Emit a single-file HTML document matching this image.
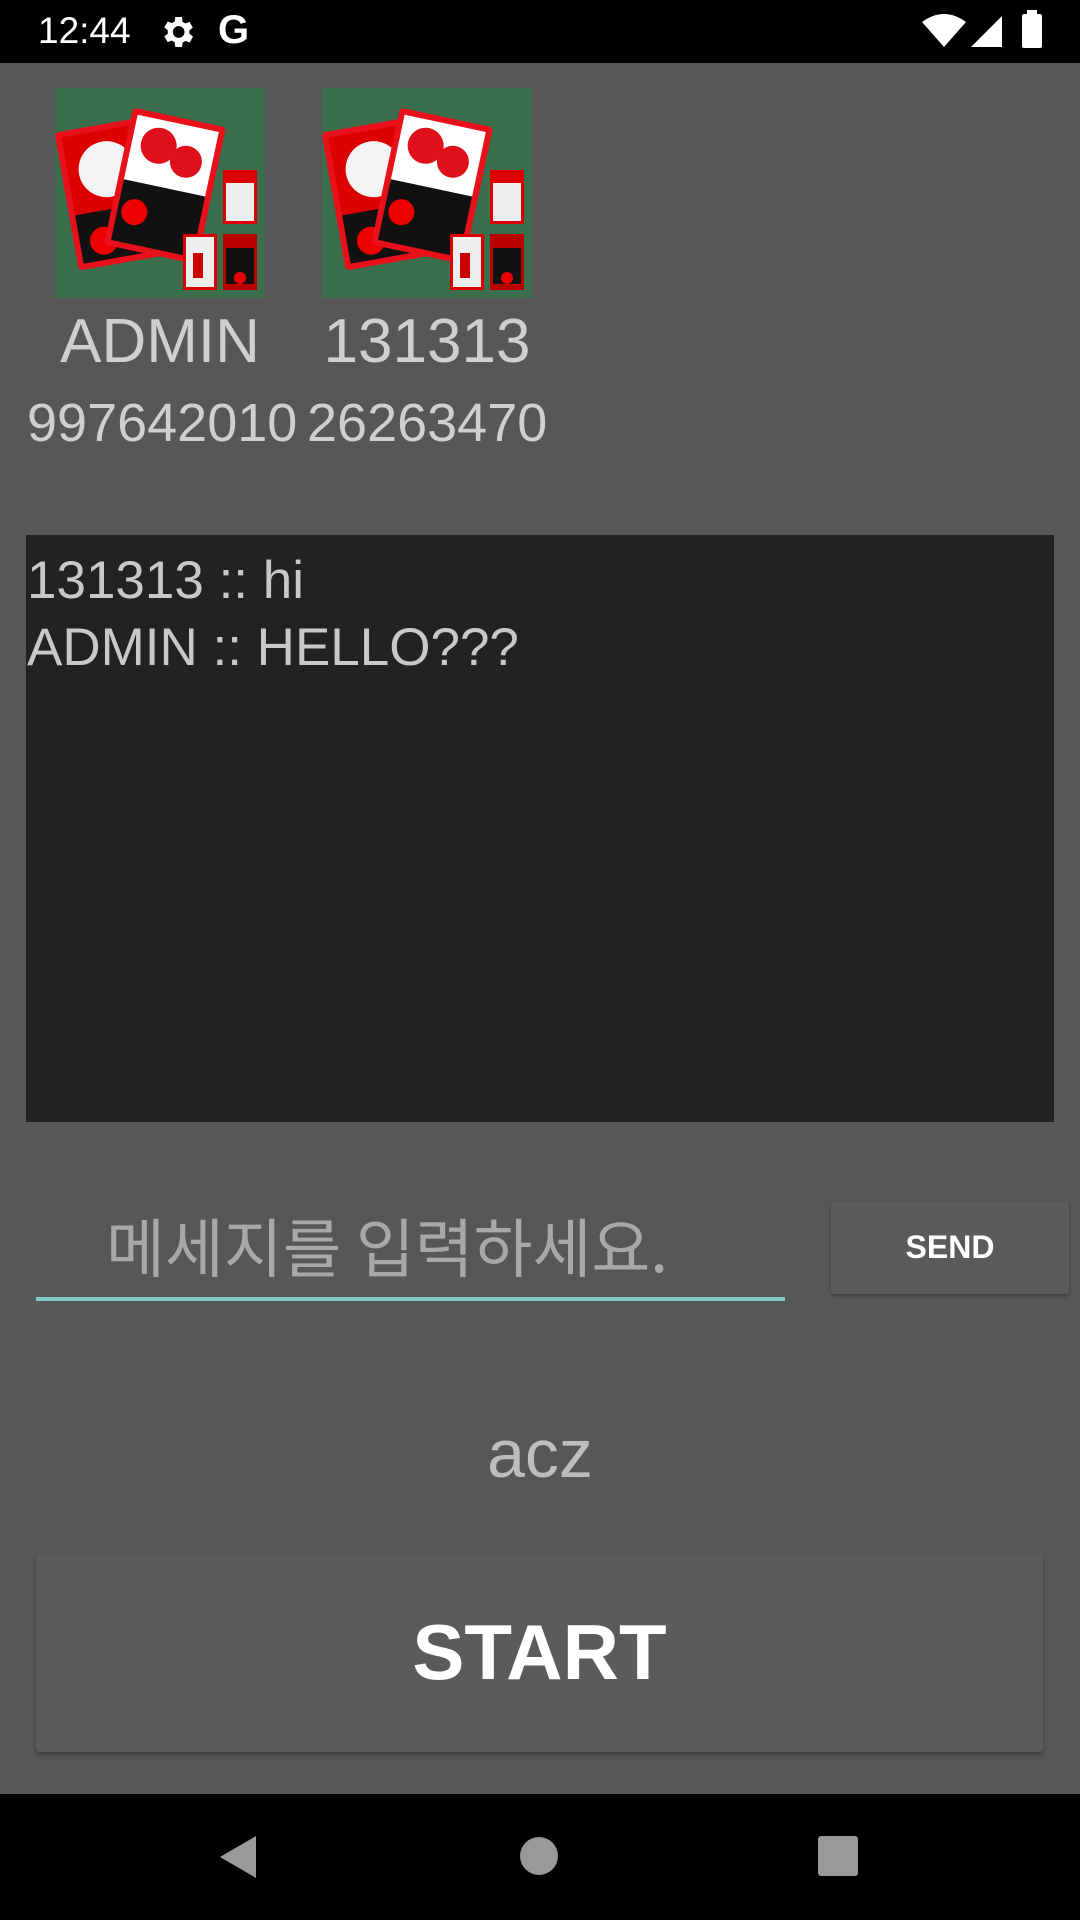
<!DOCTYPE html>
<html><head><meta charset="utf-8"><style>
*{margin:0;padding:0;box-sizing:border-box}
body{width:1080px;height:1920px;background:#575757;position:relative;overflow:hidden;font-family:"Liberation Sans","Noto Sans CJK KR",sans-serif}
.abs{position:absolute}
.status{left:0;top:0;width:1080px;height:63px;background:#000}
.nav{left:0;top:1794px;width:1080px;height:126px;background:#000}
.av{width:210px;height:210px;background:#3b6e4d;overflow:hidden}
.name{font-size:62px;color:#cfcfcf;text-align:center;width:260px}
.score{font-size:54px;color:#cfcfcf}
.chat{left:26px;top:535px;width:1028px;height:587px;background:#222;color:#c8c8c8;font-size:53px;line-height:67px;padding:12px 0 0 1px}
</style></head><body>
<div class="abs status">
  <div class="abs" style="left:38px;top:10px;color:#fff;font-size:37px;letter-spacing:0px">12:44</div>
  <svg class="abs" style="left:157px;top:12px" width="40" height="40" viewBox="0 0 24 24"><path fill="#fff" d="M19.4 13a7.5 7.5 0 0 0 0-2l2.1-1.6-2-3.5-2.5 1a7 7 0 0 0-1.7-1L15 3h-4l-.4 2.7a7 7 0 0 0-1.7 1l-2.5-1-2 3.5L6.5 11a7.5 7.5 0 0 0 0 2l-2.1 1.6 2 3.5 2.5-1a7 7 0 0 0 1.7 1L11 21h4l.4-2.7a7 7 0 0 0 1.7-1l2.5 1 2-3.5zM13 15.5a3.5 3.5 0 1 1 0-7 3.5 3.5 0 0 1 0 7z"/></svg>
  <div class="abs" style="left:218px;top:8px;color:#fff;font-size:40px;font-weight:bold">G</div>
  <svg class="abs" style="left:922px;top:14px" width="44" height="34" viewBox="0 0 44 34"><path fill="#fff" d="M22 33L0 8Q22-8 44 8z"/></svg>
  <svg class="abs" style="left:970px;top:14px" width="34" height="34" viewBox="0 0 34 34"><path fill="#fff" d="M32 2V33H1z"/></svg>
  <div class="abs" style="left:1022px;top:14px;width:20px;height:34px;background:#fff;border-radius:2px"></div>
  <div class="abs" style="left:1027px;top:10px;width:10px;height:5px;background:#fff"></div>
</div>

<div class="abs av" style="left:55px;top:88px">
 <svg width="210" height="210" viewBox="0 0 210 210">
  <g transform="rotate(-10 60 100)"><rect x="10" y="35" width="95" height="140" rx="4" fill="#e8101a"/><rect x="16" y="41" width="83" height="128" fill="#d00"/><circle cx="55" cy="80" r="28" fill="#f4f4f4"/><rect x="16" y="120" width="83" height="49" fill="#111"/><circle cx="40" cy="150" r="14" fill="#e00"/></g>
  <g transform="rotate(12 110 100)"><rect x="62" y="28" width="95" height="140" rx="4" fill="#e8101a"/><rect x="68" y="34" width="83" height="70" fill="#fff"/><circle cx="95" cy="60" r="18" fill="#e0101a"/><circle cx="125" cy="70" r="16" fill="#e0101a"/><rect x="68" y="100" width="83" height="62" fill="#111"/><circle cx="85" cy="130" r="13" fill="#e00"/></g>
  <rect x="168" y="82" width="34" height="54" fill="#d00"/><rect x="171" y="95" width="28" height="38" fill="#eee"/>
  <rect x="128" y="146" width="34" height="56" fill="#d00"/><rect x="131" y="149" width="28" height="50" fill="#eee"/><rect x="138" y="165" width="10" height="25" fill="#c00"/>
  <rect x="168" y="146" width="34" height="56" fill="#b00"/><rect x="171" y="160" width="28" height="36" fill="#111"/><circle cx="185" cy="190" r="6" fill="#e00"/>
 </svg>
</div>
<div class="abs av" style="left:322px;top:88px">
 <svg width="210" height="210" viewBox="0 0 210 210">
  <g transform="rotate(-10 60 100)"><rect x="10" y="35" width="95" height="140" rx="4" fill="#e8101a"/><rect x="16" y="41" width="83" height="128" fill="#d00"/><circle cx="55" cy="80" r="28" fill="#f4f4f4"/><rect x="16" y="120" width="83" height="49" fill="#111"/><circle cx="40" cy="150" r="14" fill="#e00"/></g>
  <g transform="rotate(12 110 100)"><rect x="62" y="28" width="95" height="140" rx="4" fill="#e8101a"/><rect x="68" y="34" width="83" height="70" fill="#fff"/><circle cx="95" cy="60" r="18" fill="#e0101a"/><circle cx="125" cy="70" r="16" fill="#e0101a"/><rect x="68" y="100" width="83" height="62" fill="#111"/><circle cx="85" cy="130" r="13" fill="#e00"/></g>
  <rect x="168" y="82" width="34" height="54" fill="#d00"/><rect x="171" y="95" width="28" height="38" fill="#eee"/>
  <rect x="128" y="146" width="34" height="56" fill="#d00"/><rect x="131" y="149" width="28" height="50" fill="#eee"/><rect x="138" y="165" width="10" height="25" fill="#c00"/>
  <rect x="168" y="146" width="34" height="56" fill="#b00"/><rect x="171" y="160" width="28" height="36" fill="#111"/><circle cx="185" cy="190" r="6" fill="#e00"/>
 </svg>
</div>

<div class="abs name" style="left:30px;top:306px">ADMIN</div>
<div class="abs name" style="left:297px;top:306px">131313</div>
<div class="abs score" style="left:27px;top:392px">997642010</div>
<div class="abs score" style="left:307px;top:392px">26263470</div>

<div class="abs chat">131313 :: hi<br>ADMIN :: HELLO???</div>

<div class="abs" style="left:106px;top:1200px;font-family:'Noto Sans CJK KR',sans-serif;font-size:64px;color:#a8a8a8;line-height:90px">메세지를 입력하세요.</div>
<div class="abs" style="left:36px;top:1297px;width:749px;height:4px;background:#80cbc4"></div>

<div class="abs" style="left:831px;top:1201px;width:238px;height:93px;background:#5b5b5d;border-radius:3px;box-shadow:0 2px 3px rgba(0,0,0,.3);color:#fff;font-size:32px;font-weight:bold;text-align:center;line-height:93px">SEND</div>

<div class="abs" style="left:0;top:1415px;width:1080px;text-align:center;font-size:68px;color:#bdbdbd">acz</div>

<div class="abs" style="left:36px;top:1553px;width:1007px;height:199px;background:#5b5b5d;border-radius:4px;box-shadow:0 3px 4px rgba(0,0,0,.3);color:#fff;font-size:78px;font-weight:bold;text-align:center;line-height:199px">START</div>

<div class="abs nav">
  <svg class="abs" style="left:218px;top:40px" width="40" height="46" viewBox="0 0 40 46"><path fill="#999" d="M38 2V44L2 23z"/></svg>
  <div class="abs" style="left:520px;top:43px;width:38px;height:38px;border-radius:50%;background:#999"></div>
  <div class="abs" style="left:818px;top:42px;width:40px;height:40px;border-radius:3px;background:#999"></div>
</div>
</body></html>
